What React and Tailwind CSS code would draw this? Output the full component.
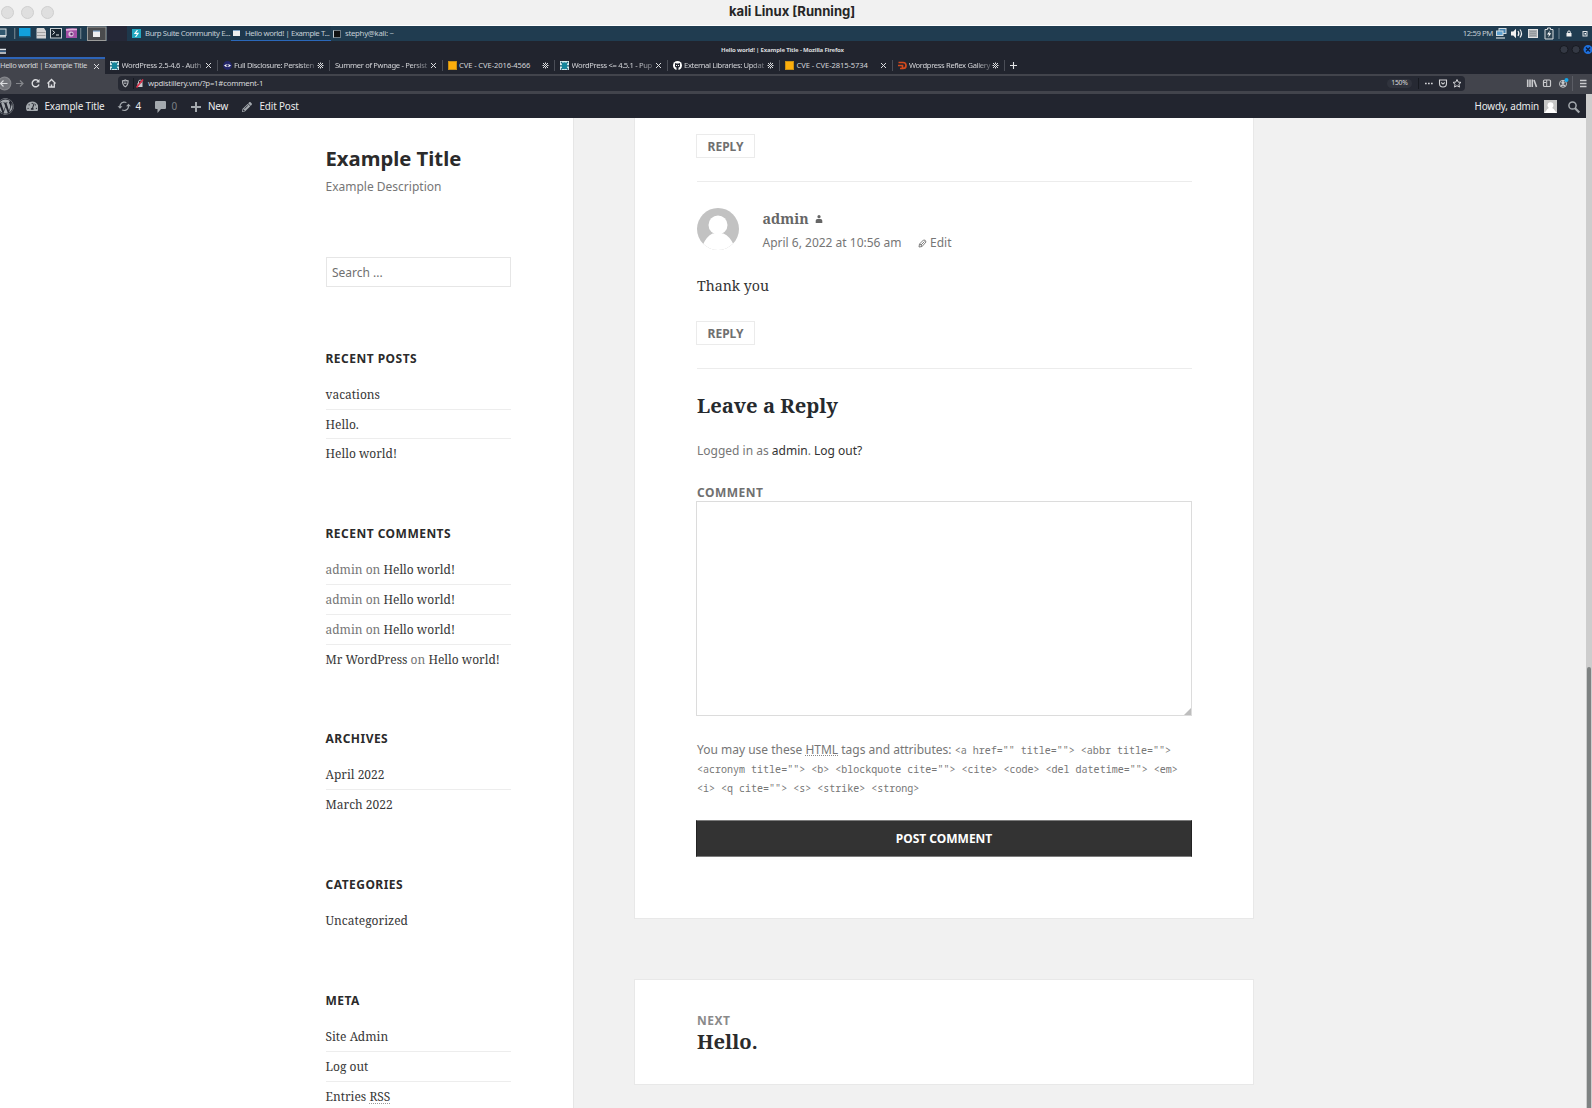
import React from "react";
import { FaWordpress, FaTachometerAlt, FaPencilAlt } from "react-icons/fa";
import { MdSync } from "react-icons/md";

const SANS = "font-['Noto_Sans','Open_Sans',sans-serif]";
const SERIF = "font-['Noto_Serif','DejaVu_Serif_Condensed',serif]";

function Person({ className, bg, fg }) {
  return (
    <svg viewBox="0 0 42 42" className={className}>
      <rect width="42" height="42" fill={bg} />
      <circle cx="21" cy="17" r="9.5" fill={fg} />
      <path d="M0 42L6 36.500Q9.500 28.500 15.500 25.500H26.500Q33 28.500 36.500 36.500L42 42z" fill={fg} />
    </svg>
  );
}

function MacTitleBar() {
  return (
    <div className="flex h-[26px] items-center border-b border-white bg-[#f1f1f1]">
      <div className="flex w-[729px] gap-[7px] pb-px pl-[0.500px]">
        {[0, 1, 2].map((i) => (
          <span key={i} className="size-[13px] rounded-full border border-[#cfcfcf] bg-[#dfdfdf]" />
        ))}
      </div>
      <span className="pb-px font-['Inter','Noto_Sans',sans-serif] text-[13.1px] font-bold text-[#262626]">kali Linux [Running]</span>
    </div>
  );
}

function Taskbar() {
  return (
    <div className="flex h-[15px] items-center bg-[#203c50] text-[7.8px] leading-none tracking-[-0.42px] text-[#c3cdd4]">
      <svg width="107" height="15" viewBox="0 0 107 15" className="shrink-0">
        <rect x="-3" y="3" width="9" height="6.5" fill="#31586f" stroke="#d5dce0" />
        <rect x="-1" y="10" width="7" height="1.5" fill="#b9c2c8" />
        <path d="M14.7 2v11M80.7 2v11" stroke="#6d7f8b" strokeWidth="1.2" />
        <rect x="19" y="2" width="11.5" height="9" fill="#12a0dc" />
        <rect x="19" y="10" width="11.5" height="1.5" fill="#155a7c" />
        <path d="M37 2h7l2 3v7.5h-9.5V3z" fill="#d4d4d4" />
        <path d="M37 6.5h8.5M37 9.5h8.5" stroke="#a2a2a2" />
        <rect x="50.5" y="2.5" width="11" height="9.5" fill="#17242e" stroke="#c8d0d4" />
        <path d="M52.5 4.5l2.3 2-2.3 2M56 9h3" stroke="#e8ecee" fill="none" />
        <rect x="66" y="2.5" width="11" height="9.5" fill="#a44fa5" />
        <path d="M66 4q4-1 11-.5" stroke="#e7b5dd" strokeWidth="1.6" fill="none" />
        <circle cx="71" cy="8" r="2.6" fill="#d9c4dd" />
        <circle cx="71.500" cy="8" r="1.2" fill="#5d2868" />
        <rect x="87.5" y="1" width="18.5" height="13.5" fill="#4a4b4d" stroke="#9b9c9a" />
        <rect x="93" y="5" width="7" height="6" fill="#eee" />
        <rect x="93" y="4.5" width="7" height="1.2" fill="#7fa3c6" />
      </svg>
      <div className="h-full w-5 bg-[#252838]" />
      <div className="flex h-full w-[104px] items-center bg-[#1e384c] pl-[5px]">
        <span className="mr-1 flex size-[9px] shrink-0 items-center justify-center bg-[#22a7c0]">
          <svg width="5" height="7" viewBox="0 0 5 7"><path d="M3.5 0L1 3.4h3L1.5 7" stroke="#fff" strokeWidth="1.1" fill="none" /></svg>
        </span>
        <span className="whitespace-nowrap">Burp Suite Community E...</span>
      </div>
      <div className="flex h-full w-[100px] items-center border-b border-[#2b68ba] bg-[#1e384c] pl-0.5">
        <span className="mr-[5px] h-[6px] w-[7px] shrink-0 border-t border-[#7fa3c6] bg-[#eee]" />
        <span className="whitespace-nowrap pt-px">Hello world! | Example T...</span>
      </div>
      <span className="ml-[2px] mr-1 h-[8px] w-[8px] border border-[#6f7b83] border-l-[#c3ccd1] bg-[#111]" />
      <span className="flex-1 tracking-[-0.28px]">stephy@kali: ~</span>
      <span className="tracking-[-0.45px]">12:59 PM</span>
      <svg width="99" height="15" viewBox="0 0 99 15" className="shrink-0">
        <rect x="6" y="2.5" width="7" height="5" fill="#3f7fae" stroke="#d2dbe0" strokeWidth="1" />
        <rect x="3.5" y="5" width="6.5" height="4.5" fill="#5fa1cf" stroke="#d2dbe0" strokeWidth="1" />
        <path d="M3 12h9" stroke="#c3ccd1" strokeWidth="1.3" />
        <path d="M18 5.5h2.3L23 2.8v9.4L20.300 9.500H18z" fill="#f1f1f1" />
        <path d="M25 5q1.800 2.500 0 5M27 3.500q3 4 0 8" stroke="#f1f1f1" strokeWidth="1.200" fill="none" />
        <rect x="35.5" y="3.500" width="9" height="8" fill="#a9adb0" stroke="#e2e2e2" />
        <path d="M37 5.500h6M37 7.500h6M37 9.500h6" stroke="#8d9296" strokeWidth=".7" />
        <path d="M54.500 2h3v1.500H60v9.500h-8V3.500h2.500z" fill="#2d4453" stroke="#d8dcdf" />
        <path d="M57 4.500l-3 4h2l-.8 3 3-4.200h-2z" fill="#fff" />
        <path d="M66 2v11" stroke="#738592" />
        <rect x="73.500" y="7" width="5" height="3.500" fill="#f1f1f1" />
        <path d="M74.700 7V6.200a1.300 1.300 0 012.600 0V7" stroke="#f1f1f1" fill="none" />
        <rect x="90" y="5.500" width="4" height="4.500" fill="none" stroke="#dfe3e5" />
        <rect x="91.500" y="7" width="1.500" height="1.500" fill="#fff" />
      </svg>
    </div>
  );
}

function WindowTitle() {
  return (
    <div className="flex h-4 items-center bg-[#21242e]">
      <svg width="721" height="16" viewBox="0 0 721 16" className="shrink-0">
        <path d="M0 8.500h6M0 12h6" stroke="#dfe3e8" strokeWidth="1.300" />
        <path d="M0 10.200h6" stroke="#3f6d99" strokeWidth="1.200" />
      </svg>
      <span className="flex-1 pt-0.5 text-[6px] font-bold leading-none tracking-[-0.18px] text-[#d8d9dc]">Hello world! | Example Title - Mozilla Firefox</span>
      <svg width="33" height="16" viewBox="0 0 33 16" className="shrink-0">
        <circle cx="5" cy="8.500" r="4" fill="#343944" stroke="#171a21" />
        <circle cx="17" cy="8.500" r="4" fill="#343944" stroke="#171a21" />
        <circle cx="29" cy="8.500" r="4.500" fill="#1d6fdc" />
        <path d="M27 6.500l4 4M31 6.500l-4 4" stroke="#0c1d3c" strokeWidth="1.400" />
      </svg>
    </div>
  );
}

function Favicon({ kind }) {
  if (kind === "cve") return <span className="size-[9px] shrink-0 border border-[#c98f14] bg-[#fcae0c]" />;
  return (
    <svg width="9" height="9" viewBox="0 0 9 9" className="shrink-0">
      {kind === "wp" && (
        <>
          <rect width="9" height="9" fill="#dcefee" />
          <path d="M1 1l2 2M8 1L6 3M0 4.800h9M1 8.500l2-2M8 8.500L6 6.500" stroke="#17627c" strokeWidth="1.200" />
          <ellipse cx="4.500" cy="4.700" rx="2.700" ry="3.500" fill="#13869b" />
        </>
      )}
      {kind === "eye" && (
        <>
          <circle cx="4.500" cy="4.500" r="4.400" fill="#23266a" />
          <path d="M1 4.500Q4.500 1.500 8 4.500 4.500 7.500 1 4.500z" fill="#fff" />
          <circle cx="4.500" cy="4.500" r="1.200" fill="#2a2d66" />
        </>
      )}
      {kind === "git" && (
        <>
          <circle cx="4.500" cy="4.500" r="4.500" fill="#fff" />
          <path d="M2 2l1.500.5h2L7 2v3.500Q6.500 6.500 5.500 6.500V9h-2V6.500Q2.500 6.500 2 5.500z" fill="#21242e" />
          <path d="M3 4.500h1M5 4.500h1" stroke="#fff" />
        </>
      )}
      {kind === "r7" && <path d="M.5 1.500h4.500q3 0 3 3t-3 3H2M0 4.500h4.500V7" stroke="#d3491c" strokeWidth="1.700" fill="none" />}
    </svg>
  );
}

function Close({ dense }) {
  return (
    <svg width="7" height="7" viewBox="0 0 7 7" className="shrink-0">
      <path d="M1 1l5 5M6 1L1 6" stroke="#dcdde0" strokeWidth="1" />
      {dense && <path d="M3.500 .5v1.500M3.500 5v1.500M.5 3.500H2M5 3.500h1.500" stroke="#dcdde0" strokeWidth="1.100" />}
    </svg>
  );
}

const TABS = [
  { icon: "wp", text: "WordPress 2.5-4.6 - Auth" },
  { icon: "eye", text: "Full Disclosure: Persisten", dense: true },
  { text: "Summer of Pwnage - Persist" },
  { icon: "cve", text: "CVE - CVE-2016-4566", dense: true, short: true },
  { icon: "wp", text: "WordPress <= 4.5.1 - Pup" },
  { icon: "git", text: "External Libraries: Updat", dense: true },
  { icon: "cve", text: "CVE - CVE-2815-5734", short: true },
  { icon: "r7", text: "Wordpress Reflex Gallery", dense: true },
];

function TabBar() {
  return (
    <div className="flex h-[17px] bg-[#21242e] text-[7.6px] leading-none text-[#d3d4d8]">
      <div className="flex w-[105px] items-center justify-between border-t-2 border-[#2d64b8] bg-[#42444c] pb-px pr-[5px]">
        <span className="whitespace-nowrap tracking-[-0.42px]">Hello world! | Example Title</span>
        <Close />
      </div>
      {TABS.map((t) => (
        <div key={t.text} className="flex w-[112.500px] items-center pl-[5px]">
          {t.icon && <Favicon kind={t.icon} />}
          <span
            className={
              "h-[11px] flex-1 whitespace-nowrap leading-[11px] " +
              (t.icon ? "ml-[2.500px] " : "") +
              (t.short ? "tracking-[-0.1px]" : "tracking-[-0.33px] [mask-image:linear-gradient(to_right,black_80%,#0004)]")
            }
          >
            {t.text}
          </span>
          <Close dense={t.dense} />
          <span className="ml-[5px] h-[11px] w-px bg-[#4a4d56]" />
        </div>
      ))}
      <svg width="16" height="17" viewBox="0 0 16 17"><path d="M8.500 5v7M5 8.500h7" stroke="#e3e4e6" strokeWidth="1.100" /></svg>
    </div>
  );
}

function UrlBar() {
  return (
    <div className="flex h-5 items-center bg-[#42444c] pb-0.5 text-[#d7d8da]">
      <svg width="118" height="18" viewBox="0 0 118 18" className="shrink-0" fill="none" stroke="#dcdde0" strokeWidth="1.200">
        <circle cx="4.500" cy="9.500" r="6.300" fill="#73757b" stroke="#85878c" />
        <path d="M.5 9.500h7M3.500 6.500l-3 3 3 3" />
        <path d="M16 9.500h7M20 6.500l3 3-3 3" stroke="#85878c" />
        <path d="M38.500 7.200A3.500 3.500 0 1039 10.500" strokeWidth="1.400" />
        <path d="M39.500 5v3.500H36z" fill="#dcdde0" stroke="none" />
        <path d="M47.500 9.500l4-4 4 4M48.700 9v4h5.600V9" strokeWidth="1.300" />
        <path d="M51.500 13v-2.500" strokeWidth="1.500" />
      </svg>
      <div className="flex h-[15px] w-[1347px] items-center rounded-sm bg-[#262933]">
        <svg width="30" height="15" viewBox="0 0 30 15" className="shrink-0" fill="none">
          <path d="M4.500 4.800Q6 4.800 7.300 4q1.300.8 2.800.8 0 4.500-2.800 6-2.800-1.500-2.800-6z" stroke="#b4b6bb" strokeWidth="1.200" />
          <path d="M6 6h2.500M6 7.500h2.500" stroke="#b4b6bb" strokeWidth=".8" />
          <path d="M15.500 2v11" stroke="#171a21" />
          <rect x="19.500" y="7" width="5" height="4" fill="#c8c9cc" />
          <path d="M20.500 7V5.500a1.800 1.800 0 013.500 0V7" stroke="#c8c9cc" />
          <path d="M18.500 11.500l6.500-8" stroke="#e0304b" strokeWidth="1.600" />
        </svg>
        <span className="flex-1 pt-px text-[7.8px] leading-none tracking-[-0.23px]">wpdistillery.vm/?p=1#comment-1</span>
        <span className="flex h-[9px] w-[25px] items-center justify-center rounded-full bg-[#30333d] pt-px text-[6.800px] leading-none tracking-[-0.2px]">150%</span>
        <svg width="53" height="15" viewBox="0 0 53 15" className="shrink-0" fill="none" stroke="#d3d4d7">
          <path d="M6.500 2v11" stroke="#171a21" />
          <path d="M13 7.500h1.700M16 7.500h1.700M19 7.500h1.700" strokeWidth="1.700" />
          <path d="M27.500 4h7v3.500a3.500 3.500 0 01-7 0zM29.300 6.500l1.700 1.600 1.700-1.600" strokeWidth="1.100" />
          <path d="M45 3.500l1.200 2.600 2.800.3-2.100 1.900.6 2.800L45 9.700l-2.500 1.400.6-2.800L41 6.400l2.800-.3z" />
        </svg>
      </div>
      <svg width="127" height="18" viewBox="0 0 127 18" fill="none" stroke="#c9cacd">
        <path d="M62.700 5.500V13M65 5.500V13M67.300 5.500V13M69 6l2.500 7" strokeWidth="1.600" />
        <rect x="78.500" y="6" width="7" height="6.500" rx="1" strokeWidth="1.200" />
        <path d="M81.700 6v6.500M79 8.500h2" />
        <circle cx="98" cy="9.800" r="3.500" />
        <circle cx="98" cy="8.800" r="1.200" fill="#c9cacd" />
        <path d="M96 12q2-2 4 0" strokeWidth="1.300" />
        <circle cx="101.500" cy="6" r="2" fill="#14a4e8" stroke="none" />
        <path d="M107.500 2v15" stroke="#5b5d65" />
        <path d="M115 6.500h6.500M115 9.500h6.500M115 12.500h6.500" strokeWidth="1.300" />
      </svg>
    </div>
  );
}

function AdminBar() {
  return (
    <div className="flex h-6 items-center bg-[#22252f] pt-px text-[9.9px] leading-none tracking-[-0.15px] text-[#eceded]">
      <FaWordpress className="-ml-[3px] size-[17px] text-[#a4a9ae]" />
      <FaTachometerAlt className="ml-[11.500px] mr-[6.500px] size-[12.500px] text-[#a4a9ae]" />
      <span className="w-[72px]">Example Title</span>
      <MdSync className="size-[14.500px] rotate-90 text-[#a4a9ae]" />
      <span className="ml-[4.500px] w-[19px]">4</span>
      <svg width="11" height="12" viewBox="0 0 11 12"><path d="M1 0h9q1 0 1 1v6q0 1-1 1H6l-3.500 4V8H1Q0 8 0 7V1q0-1 1-1z" fill="#a4a9ae" /></svg>
      <span className="ml-[6px] w-[19.500px] text-[#7c8086]">0</span>
      <svg width="10" height="10" viewBox="0 0 10 10"><path d="M5 0v10M0 5h10" stroke="#a4a9ae" strokeWidth="2" /></svg>
      <span className="ml-[7px] w-[34px]">New</span>
      <FaPencilAlt className="mr-[7.500px] size-[10px] text-[#a4a9ae]" />
      <span className="flex-1">Edit Post</span>
      <span className="mr-[5px]">Howdy, admin</span>
      <Person className="mb-px size-[13px]" bg="#c6c6c6" fg="#ffffff" />
      <svg width="29" height="16" viewBox="0 0 29 16" fill="none" stroke="#a4a9ae">
        <circle cx="15.500" cy="6.500" r="3.600" strokeWidth="1.500" />
        <path d="M18 9.200l4.300 4.300" strokeWidth="2.200" />
      </svg>
    </div>
  );
}

function Widget({ title, rows }) {
  return (
    <section className="mb-[56.800px]">
      <h2 className="mb-[12.200px] h-[18px] text-[12px] font-bold leading-[18px] tracking-[0.04em] text-[#2b2b2b]">{title}</h2>
      <ul className={`${SERIF} text-[12px] text-[#383838]`}>
        {rows.map((row, i) => (
          <li key={i} className={i ? "h-[29.700px] border-t border-[#ededed] leading-[29px]" : "h-[29.100px] leading-[30px]"}>{row}</li>
        ))}
      </ul>
    </section>
  );
}

const muted = (text) => <span className="text-[#767676]">{text}</span>;

function Sidebar() {
  const adminComment = <>{muted("admin on ")}Hello world!</>;
  return (
    <aside className="h-full w-[574px] shrink-0 overflow-hidden border-r border-[#e6e6e6] bg-white pl-[325.500px] pr-[62px]">
      <h1 className="mt-[26px] h-7 text-[20.250px] font-bold leading-7 text-[#2b2b2b]">Example Title</h1>
      <p className="mt-[5.500px] h-[18px] text-[12px] leading-[18px] text-[#767676]">Example Description</p>
      <div className="mb-[62.500px] mt-[61.500px] flex h-[30px] items-center border border-[#e6e6e6] pl-[5.500px] pt-px text-[12px] text-[#707070]">Search ...</div>
      <Widget title="RECENT POSTS" rows={["vacations", "Hello.", "Hello world!"]} />
      <Widget title="RECENT COMMENTS" rows={[adminComment, adminComment, adminComment, <>Mr WordPress {muted("on ")}Hello world!</>]} />
      <Widget title="ARCHIVES" rows={["April 2022", "March 2022"]} />
      <Widget title="CATEGORIES" rows={["Uncategorized"]} />
      <Widget title="META" rows={["Site Admin", "Log out", <>Entries <span className="underline decoration-[#999] decoration-dotted underline-offset-2">RSS</span></>]} />
    </aside>
  );
}

function ReplyButton() {
  return <div className="-ml-px flex h-6 w-[59px] items-center justify-center border border-[#ebebeb] pt-px text-[12px] font-bold text-[#707070]">REPLY</div>;
}

function Comments() {
  return (
    <article className="h-[801px] border border-t-0 border-[#e8e8e8] bg-white pl-[62px] pr-[61px] pt-4">
      <ReplyButton />
      <hr className="mt-[23px] border-[#ececec]" />
      <div className="mt-[26px] flex h-[42px]">
        <Person className="-ml-[0.500px] size-[42px] rounded-full" bg="#c2c2c2" fg="#ffffff" />
        <div className="ml-6 pt-px">
          <div className={`${SERIF} flex h-5 items-center text-[14.200px] font-bold text-[#666]`}>
            admin
            <svg width="8" height="8" viewBox="0 0 8 8" className="ml-[6.500px]"><circle cx="4" cy="1.700" r="1.600" fill="#666" /><path d="M.7 8V5.800Q.7 4 2.500 4h3q1.800 0 1.800 1.800V8z" fill="#666" /></svg>
          </div>
          <div className="mt-[5px] flex h-[18px] items-center text-[12px] text-[#767676]">
            April 6, 2022 at 10:56 am
            <svg width="9" height="9" viewBox="0 0 9 9" className="ml-4 mr-[3.500px]" fill="none" stroke="#707070"><path d="M1 8l.5-3L5.500 1Q7.500.5 8 3L4 7.500zM2 5l2 2.300M6.500 2.500l-3.500 3.500" strokeWidth=".9" /></svg>
            Edit
          </div>
        </div>
      </div>
      <p className={`${SERIF} mb-[23px] mt-[24px] h-6 text-[14.200px] leading-6 text-[#333]`}>Thank you</p>
      <ReplyButton />
      <hr className="mt-[23px] border-[#ececec]" />
      <h3 className={`${SERIF} mt-[22px] h-7 text-[20.200px] font-bold leading-7 text-[#262a2e]`}>Leave a Reply</h3>
      <p className="mt-[23px] h-[18px] text-[12px] leading-[18px] text-[#767676]">
        Logged in as <span className="text-[#333]">admin</span>. <span className="text-[#333]">Log out?</span>
      </p>
      <p className="mt-[24px] h-[17px] text-[12px] font-bold leading-[17px] tracking-[0.04em] text-[#707070]">COMMENT</p>
      <div className="-ml-px flex h-[215px] w-[496px] items-end justify-end border border-[#dcdcdc]">
        <svg width="7" height="7" viewBox="0 0 7 7"><path d="M7 0v7H0z" fill="#bdbdbd" /></svg>
      </div>
      <p className="mt-[24px] h-[57px] whitespace-nowrap text-[12px] leading-[19px] text-[#767676]">
        You may use these <span className="underline decoration-[#888] decoration-dotted underline-offset-1">HTML</span> tags and attributes:{" "}
        <code className="font-['Noto_Sans_Mono','DejaVu_Sans_Mono',monospace] text-[10.030px] leading-none">
          {'<a href="" title=""> <abbr title="">'}
          <br />
          {'<acronym title=""> <b> <blockquote cite=""> <cite> <code> <del datetime=""> <em>'}
          <br />
          {'<i> <q cite=""> <s> <strike> <strong>'}
        </code>
      </p>
      <div className="-ml-px mt-[23px] flex h-[37px] w-[496px] items-center justify-center border border-[#7c7c7c] border-x-[#222] bg-[#333] text-[12px] font-bold text-white">POST COMMENT</div>
    </article>
  );
}

export default function App() {
  return (
    <div className={`${SANS} flex h-[1108px] w-[1592px] flex-col overflow-hidden bg-[#f1f1f1]`}>
      <MacTitleBar />
      <Taskbar />
      <WindowTitle />
      <TabBar />
      <UrlBar />
      <div className="flex min-h-0 flex-1">
        <div className="flex w-[1586px] flex-col">
          <AdminBar />
          <div className="flex min-h-0 flex-1">
            <Sidebar />
            <main className="ml-[60px] w-[620px]">
              <Comments />
              <nav className="mt-[60px] h-[106px] border border-[#e8e8e8] bg-white pl-[62px] pt-[32px]">
                <div className="h-[18px] text-[12px] font-bold leading-[18px] tracking-[0.04em] text-[#8a8a8a]">NEXT</div>
                <div className={`${SERIF} h-[22px] text-[20.200px] font-bold leading-[22px] text-[#2b2b2b]`}>Hello.</div>
              </nav>
            </main>
          </div>
        </div>
        <div className="w-1.5 bg-[#cdcdcd] pl-px pt-[573px]">
          <div className="h-full w-1 rounded-t-full bg-[#7e8282]" />
        </div>
      </div>
    </div>
  );
}
